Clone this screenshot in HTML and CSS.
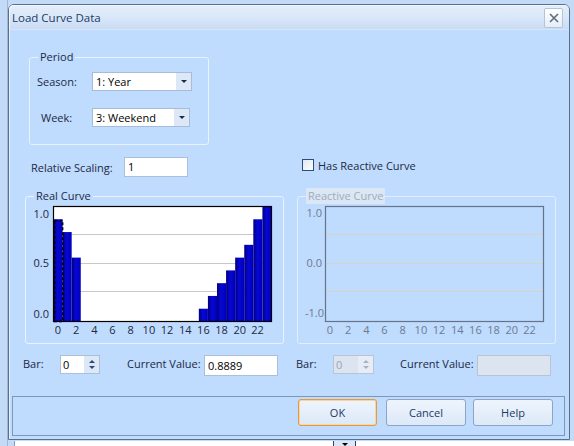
FILE: index.html
```html
<!DOCTYPE html>
<html>
<head>
<meta charset="utf-8">
<link rel="stylesheet" href="styles.css">
</head>
<body>
<div class="window">
  <div class="titlebar">
    <span class="title">Load Curve Data</span>
    <div class="close"><svg width="10" height="10" viewBox="0 0 10 10"><path d="M1 1L9 9M9 1L1 9" stroke="#5f6c7e" stroke-width="1.6" fill="none"/></svg></div>
  </div>
  <div class="body">
    <div class="group period">
      <div class="legend">Period</div>
      <div class="prow season">
        <span class="plabel">Season:</span>
        <div class="combo w100"><span class="ctext">1: Year</span><span class="dropbtn"><i class="tri"></i></span></div>
      </div>
      <div class="prow week">
        <span class="plabel">Week:</span>
        <div class="combo w98"><span class="ctext">3: Weekend</span><span class="dropbtn"><i class="tri"></i></span></div>
      </div>
    </div>

    <div class="row2">
      <span class="lbl-scaling">Relative Scaling:</span>
      <div class="textbox scaling">1</div>
      <label class="check"><span class="box"></span><span>Has Reactive Curve</span></label>
    </div>

    <div class="row3">
      <div class="group curve">
        <div class="legend">Real Curve</div>
        <svg class="chart" width="257" height="146" viewBox="0 0 257 146">
          <defs>
            <linearGradient id="bar" x1="0" x2="1" y1="0" y2="0">
              <stop offset="0" stop-color="#00007c"/>
              <stop offset="0.45" stop-color="#0707d6"/>
              <stop offset="1" stop-color="#0000b8"/>
            </linearGradient>
          </defs>
          <rect x="27.5" y="9.5" width="218" height="115" fill="#fff"/>
          <g stroke="#c8c8c8" stroke-width="1">
            <line x1="28" x2="245" y1="37.5" y2="37.5"/>
            <line x1="28" x2="245" y1="66.5" y2="66.5"/>
            <line x1="28" x2="245" y1="94.5" y2="94.5"/>
          </g>
          <g fill="url(#bar)" id="bars"></g>
          <rect x="27.5" y="9.5" width="218" height="115" fill="none" stroke="#000" stroke-width="1.2"/>
          <rect x="28.5" y="23.5" width="8.2" height="101" fill="none" stroke="#000" stroke-width="1.4" stroke-dasharray="3 2"/>
          <g class="axis" text-anchor="end">
            <text x="23" y="21">1.0</text>
            <text x="23" y="70">0.5</text>
            <text x="23" y="121">0.0</text>
          </g>
          <g class="axis" text-anchor="middle">
            <text x="32" y="137">0</text>
            <text x="50.2" y="137">2</text>
            <text x="68.4" y="137">4</text>
            <text x="86.5" y="137">6</text>
            <text x="104.7" y="137">8</text>
            <text x="122.9" y="137">10</text>
            <text x="141" y="137">12</text>
            <text x="159.2" y="137">14</text>
            <text x="177.4" y="137">16</text>
            <text x="195.5" y="137">18</text>
            <text x="213.7" y="137">20</text>
            <text x="231.5" y="137">22</text>
          </g>
        </svg>
      </div>
      <div class="group curve disabled">
        <div class="legend">Reactive Curve</div>
        <svg class="chart" width="257" height="146" viewBox="0 0 257 146">
          <g stroke="#d8d2c6" stroke-width="1">
            <line x1="28" x2="245" y1="37.5" y2="37.5"/>
            <line x1="28" x2="245" y1="66.5" y2="66.5"/>
            <line x1="28" x2="245" y1="94.5" y2="94.5"/>
          </g>
          <rect x="27.5" y="9.5" width="218" height="115" fill="none" stroke="#66748a" stroke-width="1.2"/>
          <g class="axis dis" text-anchor="end">
            <text x="24" y="20">1.0</text>
            <text x="24" y="70">0.0</text>
            <text x="26" y="120">-1.0</text>
          </g>
          <g class="axis dis" text-anchor="middle">
            <text x="32" y="137">0</text>
            <text x="50.2" y="137">2</text>
            <text x="68.4" y="137">4</text>
            <text x="86.5" y="137">6</text>
            <text x="104.7" y="137">8</text>
            <text x="122.9" y="137">10</text>
            <text x="141" y="137">12</text>
            <text x="159.2" y="137">14</text>
            <text x="177.4" y="137">16</text>
            <text x="195.5" y="137">18</text>
            <text x="213.7" y="137">20</text>
            <text x="231.5" y="137">22</text>
          </g>
        </svg>
      </div>
    </div>

    <div class="row4">
      <span class="l-bar">Bar:</span>
      <div class="spin"><span class="stext">0</span><span class="spinbtns"><i class="up"></i><i class="down"></i></span></div>
      <span class="l-cur">Current Value:</span>
      <div class="textbox cur">0.8889</div>
      <span class="l-bar r">Bar:</span>
      <div class="spin dis"><span class="stext">0</span><span class="spinbtns"><i class="up"></i><i class="down"></i></span></div>
      <span class="l-cur r">Current Value:</span>
      <div class="textbox cur dis"></div>
    </div>

    <div class="btnpanel">
      <button class="btn ok">OK</button>
      <button class="btn cancel">Cancel</button>
      <button class="btn help">Help</button>
    </div>
  </div>
</div>
<div class="strip"><span class="stripcell"><i class="tri"></i></span></div>
<script src="app.js"></script>
</body>
</html>
```
FILE: app.js
```js
(function () {
  var vals = [8/9, 7/9, 5/9];
  for (var k = 3; k <= 15; k++) vals.push(0);
  vals = vals.concat([1/9, 2/9, 3/9, 4/9, 5/9, 6/9, 8/9, 1]);
  var g = document.getElementById('bars');
  var ns = 'http://www.w3.org/2000/svg';
  var w = 218 / 24;
  vals.forEach(function (v, i) {
    if (v <= 0) return;
    var r = document.createElementNS(ns, 'rect');
    var h = v * 115;
    r.setAttribute('x', (27.5 + i * w).toFixed(2));
    r.setAttribute('width', w.toFixed(2));
    r.setAttribute('y', (124.5 - h).toFixed(2));
    r.setAttribute('height', h.toFixed(2));
    g.appendChild(r);
  });
})();
```
FILE: styles.css
```css
html, body { margin: 0; padding: 0; }
body {
  width: 574px; height: 446px; overflow: hidden;
  background: linear-gradient(to right, #c4dbf7 7px, #9fb8d8 7px 8px, #c4dbf7 8px);
  font-family: "Open Sans", "Noto Sans", sans-serif;
  font-size: 11px;
  color: #1b2a44;
}
.window {
  margin: 4px 0 0 8px;
  width: 560px; height: 434px;
  border: 1px solid #56708f;
  border-radius: 6px 6px 0 0;
  background: #bfdbfe;
  box-shadow: inset 1px 1px 0 #e6f0fc;
  display: flex; flex-direction: column;
}
.titlebar {
  height: 24px;
  border-bottom: 1px solid #d6e5f7;
  border-radius: 5px 5px 0 0;
  background: linear-gradient(#e4eefb, #d9e7f8 50%, #c9dcf5);
  display: flex; align-items: center;
  padding: 0 6px 0 3px;
  box-shadow: inset 1px 1px 0 #f2f7fd;
}
.title { flex: 1; color: #1c3a66; font-size: 11.5px; }
.close {
  width: 17px; height: 18px;
  border: 1px solid #b3c5dc; border-radius: 2px;
  background: linear-gradient(#ffffff, #e5edf7);
  display: flex; align-items: center; justify-content: center;
  margin-top: 1px;
}
.body { flex: 1; display: flex; flex-direction: column; }

.group {
  border: 1px solid #e9f2fd;
  border-radius: 3px;
}
.legend {
  width: fit-content;
  height: 16px; line-height: 16px;
  margin: -9px 0 -7px 8px;
  padding: 0 2px;
  background: #bfdbfe;
  color: #1b2a44;
}
.period {
  margin: 27px 0 0 20px;
  width: 178px; height: 86px;
}
.prow { display: flex; align-items: center; height: 19px; }
.season { margin-top: 14px; padding-left: 7px; }
.week { margin-top: 17px; padding-left: 11px; }
.season .plabel { width: 55px; }
.week .plabel { width: 51px; }
.combo {
  height: 17px;
  border: 1px solid #a6bcd8;
  background: #fff;
  display: flex; align-items: center;
}
.w100 { width: 98px; }
.w98 { width: 96px; }
.ctext { flex: 1; padding-left: 3px; color: #000; }
.dropbtn {
  width: 15px; height: 17px;
  background: #dde8f6;
  display: flex; align-items: center; justify-content: center;
}
.tri {
  width: 0; height: 0;
  border-left: 3px solid transparent; border-right: 3px solid transparent;
  border-top: 3px solid #1b2a44;
}

.row2 {
  margin-top: 12px;
  height: 20px;
  display: flex; align-items: center;
  padding-left: 22px;
}
.lbl-scaling { width: 93px; }
.textbox {
  height: 18px; line-height: 18px;
  border: 1px solid #a9bfda;
  background: #fff;
  padding-left: 3px;
  color: #000;
  box-sizing: content-box;
}
.scaling { width: 59px; }
.check { display: flex; align-items: center; margin-left: 114px; margin-top: -4px; }
.check .box {
  width: 10px; height: 10px;
  border: 1px solid #2a4d7e;
  background: linear-gradient(135deg, #dfe8f3, #ffffff);
  margin-right: 4px;
}

.row3 {
  margin-top: 19px;
  display: flex; gap: 13px;
  padding-left: 16px;
}
.curve { width: 257px; height: 146px; }
.chart { display: block; }
.axis { font-family: "Open Sans", "Noto Sans", sans-serif; font-size: 11px; fill: #1b2a44; }
.axis.dis { fill: #6c7a91; }
.disabled { border-color: #e4eefb; }
.disabled .legend { background: #dbe7f5; color: #a1abb9; }

.row4 {
  margin-top: 11px;
  height: 21px;
  display: flex; align-items: center;
  padding-left: 14px;
}
.l-bar { width: 37px; margin-top: -4px; }
.l-bar.r { margin-left: 18px; }
.l-cur { width: 77px; margin-left: 27px; margin-top: -4px; }
.l-cur.r { margin-left: 26px; }
.spin {
  width: 38px; height: 17px;
  border: 1px solid #a9bfda;
  background: #fff;
  display: flex; align-items: center;
  margin-top: -2px;
}
.stext { flex: 1; padding-left: 2px; color: #000; }
.spinbtns {
  width: 15px; height: 17px;
  background: #dde8f6;
  display: flex; flex-direction: column; align-items: center; justify-content: center; gap: 3px;
}
.spinbtns .up { width: 0; height: 0; border-left: 3px solid transparent; border-right: 3px solid transparent; border-bottom: 3px solid #2b4a78; }
.spinbtns .down { width: 0; height: 0; border-left: 3px solid transparent; border-right: 3px solid transparent; border-top: 3px solid #2b4a78; }
.spin.dis { width: 39px; background: #dbe4ef; border-color: #b6c4d6; }
.spin.dis .stext { color: #9aa4b2; }
.spin.dis .spinbtns { background: #e6edf6; }
.spin.dis .spinbtns i { border-bottom-color: #a9b3c0; border-top-color: #a9b3c0; }
.cur { width: 69px; height: 19px; line-height: 20px; }
.textbox.dis { background: #dbe4ef; border-color: #b6c4d6; }

.btnpanel {
  margin: 20px 0 0 3px;
  width: 553px; height: 40px;
  border: 1px solid #7f97b9;
  display: flex; align-items: flex-start;
  padding-top: 2px; box-sizing: border-box;
  padding-left: 285px;
}
.btn {
  width: 79px; height: 27px;
  border: 1px solid #8da4c4; border-radius: 3px;
  background: linear-gradient(#edf4fd, #dde9f8);
  font-family: "Open Sans", "Noto Sans", sans-serif;
  font-size: 11px; color: #1c3a66;
  padding: 0;
}
.btn.cancel { width: 80px; margin-left: 9px; }
.btn.help { width: 80px; margin-left: 7px; }
.btn.ok { border-color: #e59a3c; box-shadow: inset 0 0 0 1px #f6d6a6; }

.strip {
  margin: 1px 0 0 14px;
  height: 6px;
  background: #fff;
  border-left: 1px solid #8b9bb0;
  display: flex;
}
.stripcell {
  margin-left: 318px;
  width: 21px; height: 6px;
  border-left: 1px solid #33445a; border-right: 1px solid #33445a;
  background: #dbe8f7;
  display: flex; justify-content: center; align-items: center;
}
.stripcell .tri { border-top-color: #000; }
```
